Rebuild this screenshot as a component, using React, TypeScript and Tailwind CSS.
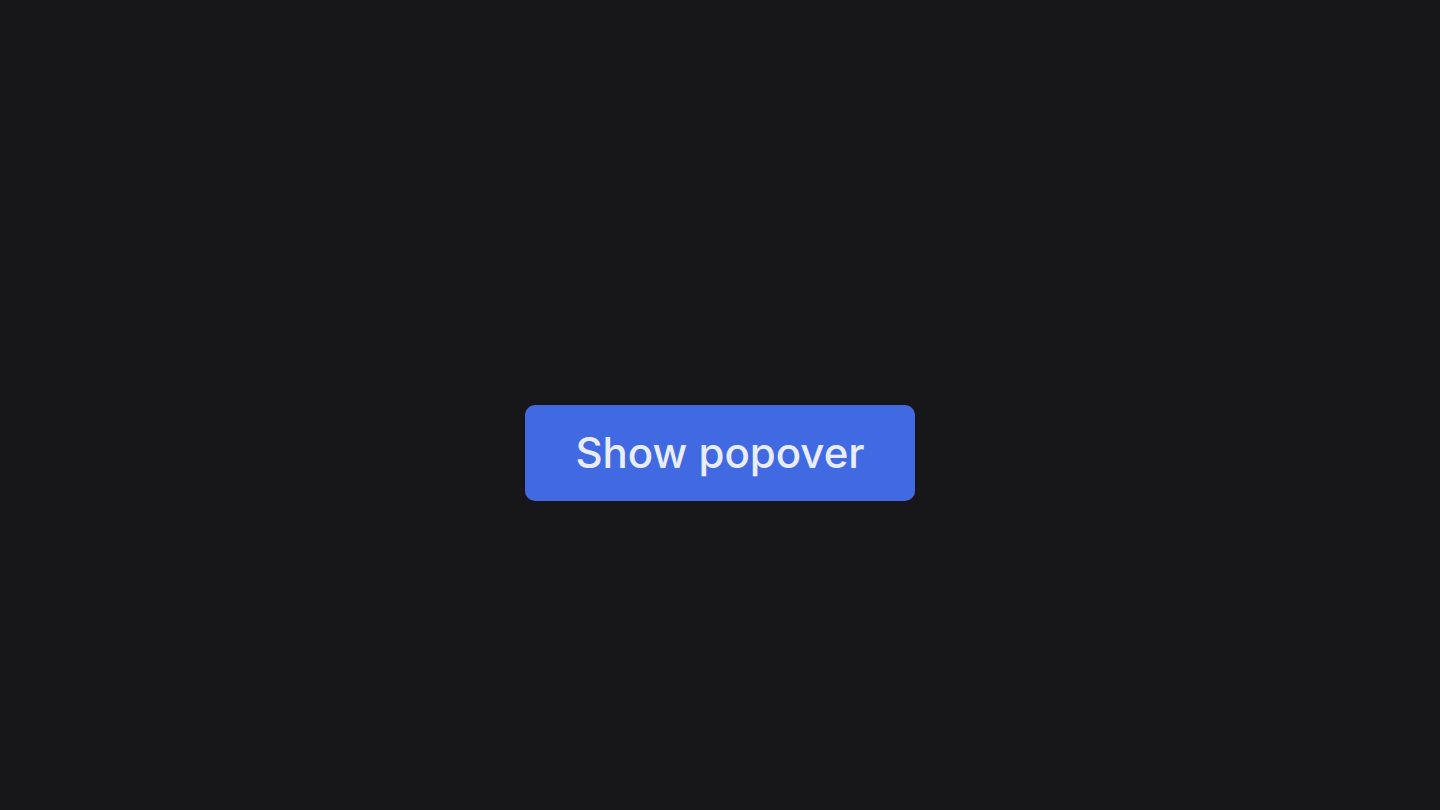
export default function App() {
  return (
    <div
      className="flex h-screen w-full justify-center bg-[#171719] pt-[405px]"
      style={{ fontFamily: 'Inter, "Noto Sans", sans-serif' }}
    >
      <button className="h-[96px] w-[390px] rounded-[10px] bg-[#4169e1] text-[42px] font-medium leading-none text-[#e9edfb]">
        Show popover
      </button>
    </div>
  )
}
